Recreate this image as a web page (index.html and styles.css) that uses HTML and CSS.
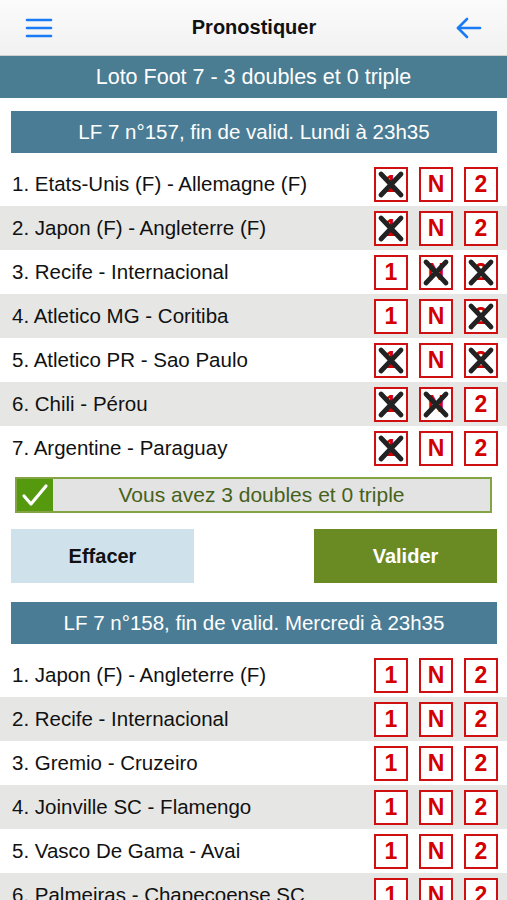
FILE: index.html
```html
<!DOCTYPE html>
<html lang="fr">
<head>
  <meta charset="UTF-8">
  <title>Pronostiquer</title>
  <link rel="stylesheet" href="styles.css">
</head>
<body>
  <header class="topbar">
    <button class="icon-btn" aria-label="Menu">
      <svg width="28" height="22" viewBox="0 0 28 22">
        <g stroke="#1a7cf5" stroke-width="2.6" stroke-linecap="round">
          <line x1="2" y1="3" x2="26" y2="3"/>
          <line x1="2" y1="11" x2="26" y2="11"/>
          <line x1="2" y1="19" x2="26" y2="19"/>
        </g>
      </svg>
    </button>
    <h1>Pronostiquer</h1>
    <button class="icon-btn" aria-label="Retour">
      <svg width="28" height="22" viewBox="0 0 28 22">
        <g stroke="#1a7cf5" stroke-width="2.6" stroke-linecap="round" stroke-linejoin="round" fill="none">
          <line x1="3" y1="11" x2="25" y2="11"/>
          <polyline points="12,2 3,11 12,20"/>
        </g>
      </svg>
    </button>
  </header>

  <div class="band">Loto Foot 7 - 3 doubles et 0 triple</div>

  <section class="grille">
    <h2 class="grille-title">LF 7 n°157, fin de valid. Lundi à 23h35</h2>
    <ul class="matches" id="grille157"></ul>

    <div class="status">
      <span class="status-check">
        <svg width="28" height="24" viewBox="0 0 28 24">
          <polyline points="3,13 10,21 25,3" fill="none" stroke="#fff" stroke-width="3.2" stroke-linecap="round" stroke-linejoin="round"/>
        </svg>
      </span>
      <span class="status-text">Vous avez 3 doubles et 0 triple</span>
    </div>

    <div class="actions">
      <button class="btn btn-clear">Effacer</button>
      <button class="btn btn-ok">Valider</button>
    </div>
  </section>

  <section class="grille">
    <h2 class="grille-title second">LF 7 n°158, fin de valid. Mercredi à 23h35</h2>
    <ul class="matches" id="grille158"></ul>
  </section>

  <script>
    const cross = '<svg class="cross" viewBox="0 0 34 35"><g stroke="#222" stroke-width="4.8" stroke-linecap="round"><line x1="7" y1="7" x2="27" y2="28"/><line x1="27" y1="7" x2="7" y2="28"/></g></svg>';

    const grille157 = [
      ['1. Etats-Unis (F) - Allemagne (F)', [1, 0, 0]],
      ['2. Japon (F) - Angleterre (F)', [1, 0, 0]],
      ['3. Recife - Internacional', [0, 1, 1]],
      ['4. Atletico MG - Coritiba', [0, 0, 1]],
      ['5. Atletico PR - Sao Paulo', [1, 0, 1]],
      ['6. Chili - Pérou', [1, 1, 0]],
      ['7. Argentine - Paraguay', [1, 0, 0]]
    ];

    const grille158 = [
      ['1. Japon (F) - Angleterre (F)', [0, 0, 0]],
      ['2. Recife - Internacional', [0, 0, 0]],
      ['3. Gremio - Cruzeiro', [0, 0, 0]],
      ['4. Joinville SC - Flamengo', [0, 0, 0]],
      ['5. Vasco De Gama - Avai', [0, 0, 0]],
      ['6. Palmeiras - Chapecoense SC', [0, 0, 0]]
    ];

    function render(id, matches) {
      const list = document.getElementById(id);
      matches.forEach(function(m) {
        const li = document.createElement('li');
        li.className = 'match';
        let html = '<span class="match-name">' + m[0] + '</span><span class="choices">';
        ['1', 'N', '2'].forEach(function(label, i) {
          html += '<span class="choice">' + label + (m[1][i] ? cross : '') + '</span>';
        });
        li.innerHTML = html + '</span>';
        list.appendChild(li);
      });
    }

    render('grille157', grille157);
    render('grille158', grille158);
  </script>
</body>
</html>
```

FILE: styles.css
```css
body {
  margin: 0;
  font-family: "Liberation Sans", Arial, sans-serif;
  background: #fff;
  color: #111;
  overflow: hidden;
}
.topbar {
  height: 55px;
  display: flex;
  align-items: center;
  justify-content: space-between;
  padding: 0 24px 0 25px;
  background: linear-gradient(#fbfbfb, #f1f1f1);
  border-bottom: 1px solid #cfcfcf;
}
.topbar h1 {
  margin: 0;
  font-size: 20px;
  font-weight: bold;
  color: #111;
}
.icon-btn {
  background: none;
  border: none;
  padding: 0;
  display: flex;
}
.band {
  height: 42px;
  line-height: 42px;
  background: #4a7c92;
  color: #fff;
  text-align: center;
  font-size: 21.5px;
}
.grille-title {
  margin: 13px 10px 9px 11px;
  height: 42px;
  line-height: 42px;
  background: #4a7d95;
  color: #fff;
  text-align: center;
  font-size: 20.5px;
  font-weight: normal;
}
.grille-title.second {
  margin-top: 19px;
}
.matches {
  list-style: none;
  margin: 0;
  padding: 0;
}
.match {
  height: 44px;
  display: flex;
  align-items: center;
  justify-content: space-between;
  padding: 0 9px 0 12px;
}
.match:nth-child(even) {
  background: #e6e6e4;
}
.match-name {
  font-size: 20.5px;
  color: #111;
}
.choices {
  display: flex;
  gap: 11px;
}
.choice {
  position: relative;
  width: 34px;
  height: 35px;
  box-sizing: border-box;
  border: 2px solid #d01010;
  background: #fff;
  color: #d40000;
  font-size: 23px;
  font-weight: bold;
  display: flex;
  align-items: center;
  justify-content: center;
}
.cross {
  position: absolute;
  left: -2px;
  top: -2px;
  width: 34px;
  height: 35px;
}
.status {
  margin: 7px 15px 0 15px;
  height: 36px;
  display: flex;
  box-sizing: border-box;
  border: 2px solid #84a444;
  background: #e3e3e3;
}
.status-check {
  width: 36px;
  background: #55990f;
  display: flex;
  align-items: center;
  justify-content: center;
}
.status-text {
  flex: 1;
  text-align: center;
  line-height: 32px;
  font-size: 21px;
  color: #46621a;
  padding-right: 20px;
}
.actions {
  display: flex;
  justify-content: space-between;
  margin: 16px 10px 0 11px;
}
.btn {
  width: 183px;
  height: 54px;
  border: none;
  font-family: "Liberation Sans", Arial, sans-serif;
  font-size: 20px;
  font-weight: bold;
}
.btn-clear {
  background: #cfe2ec;
  color: #111;
}
.btn-ok {
  background: #6a8a24;
  color: #fff;
}
```
